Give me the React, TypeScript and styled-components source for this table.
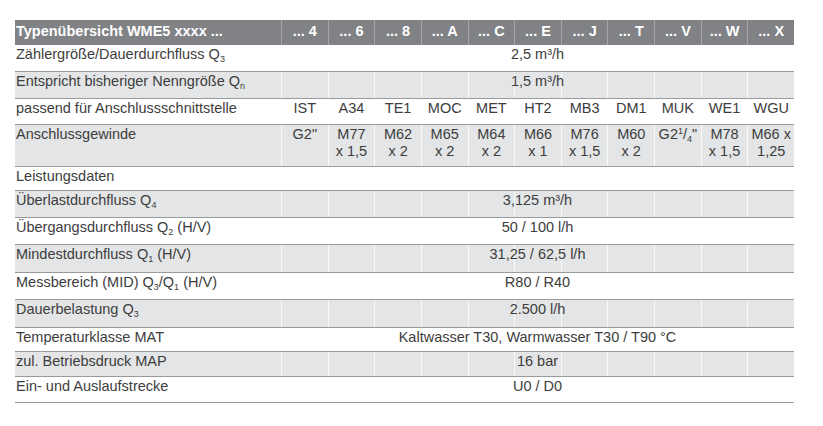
import * as React from "react";
import styled, { createGlobalStyle } from "styled-components";

const GlobalStyle = createGlobalStyle`
  body {
    margin: 0;
    background: #ffffff;
    font-family: "Liberation Sans", Arial, sans-serif;
    color: #3d3d3d;
  }
`;

const Page = styled.div`
  padding: 20px 0 0 15px;
`;

const Table = styled.div`
  width: 779px;
  font-size: 14.5px;
  line-height: 17px;
`;

const Row = styled.div<{ $h: number; $shade?: boolean; $head?: boolean }>`
  display: grid;
  grid-template-columns: 266px repeat(11, 1fr);
  height: ${(p) => p.$h}px;
  background: ${(p) => (p.$head ? "#808285" : p.$shade ? "#e3e5e6" : "#ffffff")};
  color: ${(p) => (p.$head ? "#ffffff" : "#3d3d3d")};
  font-weight: ${(p) => (p.$head ? "bold" : "normal")};
  box-sizing: border-box;
  border-bottom: ${(p) => (p.$head ? "none" : "1px solid #999a9b")};
`;

const Label = styled.div`
  grid-column: 1;
  grid-row: 1;
  padding: 1px 0 0 1px;
  white-space: nowrap;
`;

// separators: faint white on grey rows, invisible on white rows
const Cell = styled.div<{ $head?: boolean }>`
  grid-row: 1;
  border-left: 1px solid ${(p) => (p.$head ? "#a4a6a8" : "rgba(255, 255, 255, 0.75)")};
  text-align: center;
  padding-top: 1px;
  white-space: pre-line;
`;

const Span = styled.div`
  grid-column: 2 / -1;
  grid-row: 1;
  text-align: center;
  padding-top: 1px;
  z-index: 1;
`;

const Sub = styled.sub`
  font-size: 9px;
  vertical-align: -3px;
  line-height: 0;
`;

const Sup = styled.sup`
  font-size: 9px;
  vertical-align: 5px;
  line-height: 0;
`;

const codes = ["4", "6", "8", "A", "C", "E", "J", "T", "V", "W", "X"];
const ifaces = ["IST", "A34", "TE1", "MOC", "MET", "HT2", "MB3", "DM1", "MUK", "WE1", "WGU"];
const threads: React.ReactNode[] = [
  'G2"',
  "M77\nx 1,5",
  "M62\nx 2",
  "M65\nx 2",
  "M64\nx 2",
  "M66\nx 1",
  "M76\nx 1,5",
  "M60\nx 2",
  <>G2<Sup>1</Sup>/<Sub>4</Sub>"</>,
  "M78\nx 1,5",
  "M66 x\n1,25",
];

type SpanRow = { label: React.ReactNode; value?: React.ReactNode; h: number };

const Empty = () => (
  <>
    {codes.map((c, i) => (
      <Cell key={c} style={{ gridColumn: i + 2 }} />
    ))}
  </>
);

const SpanLine = ({ row, shade }: { row: SpanRow; shade: boolean }) => (
  <Row $h={row.h} $shade={shade}>
    <Label>{row.label}</Label>
    <Empty />
    {row.value && <Span>{row.value}</Span>}
  </Row>
);

const topRows: SpanRow[] = [
  { label: <>Zählergröße/Dauerdurchfluss Q<Sub>3</Sub></>, value: "2,5 m³/h", h: 27 },
  { label: <>Entspricht bisheriger Nenngröße Q<Sub>n</Sub></>, value: "1,5 m³/h", h: 27 },
];

const perfRows: SpanRow[] = [
  { label: "Leistungsdaten", h: 24 },
  { label: <>Überlastdurchfluss Q<Sub>4</Sub></>, value: "3,125 m³/h", h: 27 },
  { label: <>Übergangsdurchfluss Q<Sub>2</Sub> (H/V)</>, value: "50 / 100 l/h", h: 27 },
  { label: <>Mindestdurchfluss Q<Sub>1</Sub> (H/V)</>, value: "31,25 / 62,5 l/h", h: 28 },
  { label: <>Messbereich (MID) Q<Sub>3</Sub>/Q<Sub>1</Sub> (H/V)</>, value: "R80 / R40", h: 27 },
  { label: <>Dauerbelastung Q<Sub>3</Sub></>, value: "2.500 l/h", h: 28 },
  { label: "Temperaturklasse MAT", value: "Kaltwasser T30, Warmwasser T30 / T90 °C", h: 24 },
  { label: "zul. Betriebsdruck MAP", value: "16 bar", h: 25 },
  { label: "Ein- und Auslaufstrecke", value: "U0 / D0", h: 26 },
];

export default function App() {
  return (
    <Page>
      <GlobalStyle />
      <Table>
        <Row $h={25} $head>
          <Label style={{ paddingTop: 3 }}>Typenübersicht WME5 xxxx ...</Label>
          {codes.map((c, i) => (
            <Cell key={c} $head style={{ gridColumn: i + 2, paddingTop: 3 }}>
              ... {c}
            </Cell>
          ))}
        </Row>
        {topRows.map((r, i) => (
          <SpanLine key={i} row={r} shade={i % 2 === 1} />
        ))}
        <Row $h={26}>
          <Label>passend für Anschlussschnittstelle</Label>
          {ifaces.map((c, i) => (
            <Cell key={c} style={{ gridColumn: i + 2 }}>{c}</Cell>
          ))}
        </Row>
        <Row $h={42} $shade>
          <Label>Anschlussgewinde</Label>
          {threads.map((c, i) => (
            <Cell key={i} style={{ gridColumn: i + 2 }}>{c}</Cell>
          ))}
        </Row>
        {perfRows.map((r, i) => (
          <SpanLine key={i} row={r} shade={i % 2 === 1} />
        ))}
      </Table>
    </Page>
  );
}
